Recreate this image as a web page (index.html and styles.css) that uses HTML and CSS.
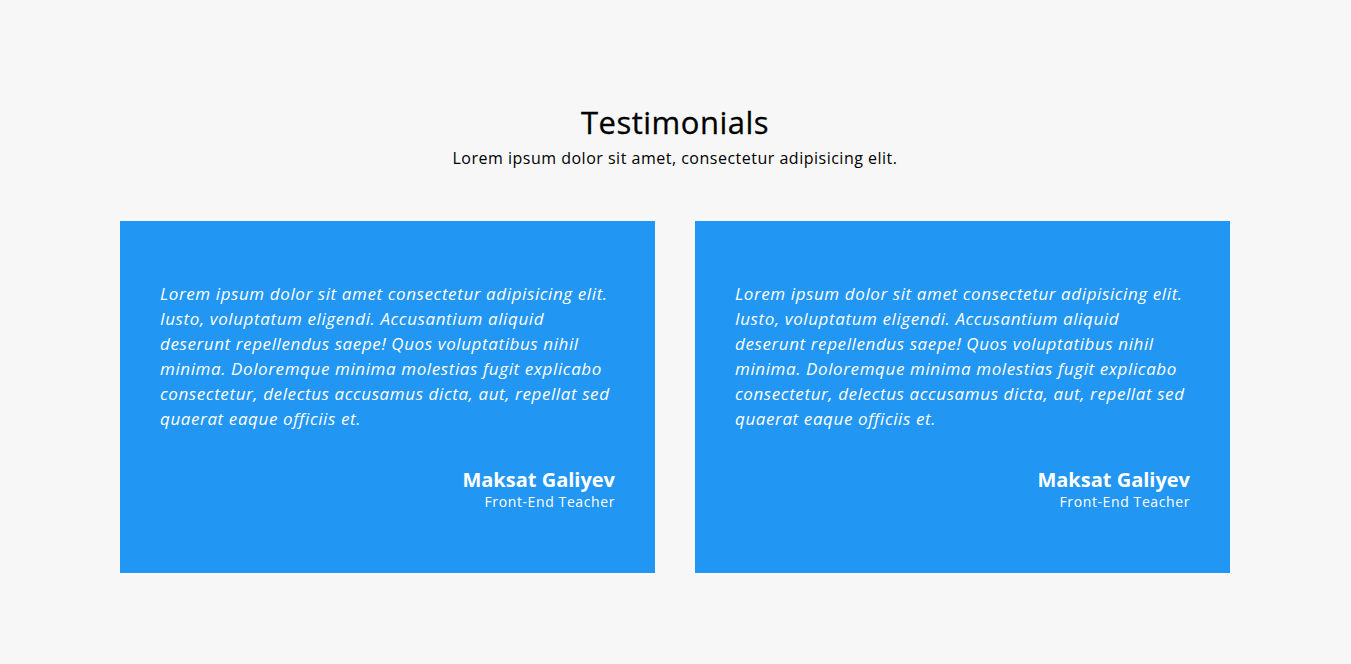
FILE: index.html
```html
<!DOCTYPE html>
<html lang="en">
<head>
<meta charset="utf-8">
<title>Testimonials</title>
<link rel="stylesheet" href="styles.css">
</head>
<body>
<section class="testimonials">
  <header class="section-head">
    <h2 class="section-title">Testimonials</h2>
    <p class="section-sub">Lorem ipsum dolor sit amet, consectetur adipisicing elit.</p>
  </header>
  <div class="cards">
    <article class="card">
      <p class="quote">Lorem ipsum dolor sit amet consectetur adipisicing elit. Iusto, voluptatum eligendi. Accusantium aliquid deserunt repellendus saepe! Quos voluptatibus nihil minima. Doloremque minima molestias fugit explicabo consectetur, delectus accusamus dicta, aut, repellat sed quaerat eaque officiis et.</p>
      <div class="author">
        <div class="author-name">Maksat Galiyev</div>
        <div class="author-role">Front-End Teacher</div>
      </div>
    </article>
    <article class="card">
      <p class="quote">Lorem ipsum dolor sit amet consectetur adipisicing elit. Iusto, voluptatum eligendi. Accusantium aliquid deserunt repellendus saepe! Quos voluptatibus nihil minima. Doloremque minima molestias fugit explicabo consectetur, delectus accusamus dicta, aut, repellat sed quaerat eaque officiis et.</p>
      <div class="author">
        <div class="author-name">Maksat Galiyev</div>
        <div class="author-role">Front-End Teacher</div>
      </div>
    </article>
  </div>
</section>
</body>
</html>
```
FILE: styles.css
```css
* { box-sizing: border-box; }
html, body { margin: 0; padding: 0; }
html { background: #f7f7f7; }
body {
  background: #f7f7f7;
  border-right: 1px solid #fafafa;
  min-height: 664px;
  font-family: "Open Sans", "DejaVu Sans", sans-serif;
  color: #000;
}
.testimonials {
  width: 1110px;
  margin: 0 auto;
  padding-top: 100px;
}
.section-head {
  text-align: center;
}
.section-title {
  margin: 0;
  font-size: 31px;
  font-weight: 400;
  letter-spacing: 0.5px;
  line-height: 44px;
  -webkit-text-stroke: 0.3px #000;
}
.section-sub {
  margin: 2px 0 0;
  font-size: 16px;
  letter-spacing: 0.5px;
  line-height: 24px;
}
.cards {
  margin-top: 51px;
  display: flex;
  gap: 40px;
}
.card {
  flex: 1;
  height: 352px;
  background: #2196f3;
  color: #fff;
  padding: 60px 40px;
}
.quote {
  margin: 0;
  font-style: italic;
  font-weight: 500;
  font-size: 17px;
  letter-spacing: 0.6px;
  line-height: 25px;
}
.author {
  margin-top: 37px;
  text-align: right;
}
.author-name {
  font-size: 20px;
  font-weight: 700;
  line-height: 24px;
}
.author-role {
  font-size: 14px;
  letter-spacing: 0.6px;
  line-height: 20px;
}
```
